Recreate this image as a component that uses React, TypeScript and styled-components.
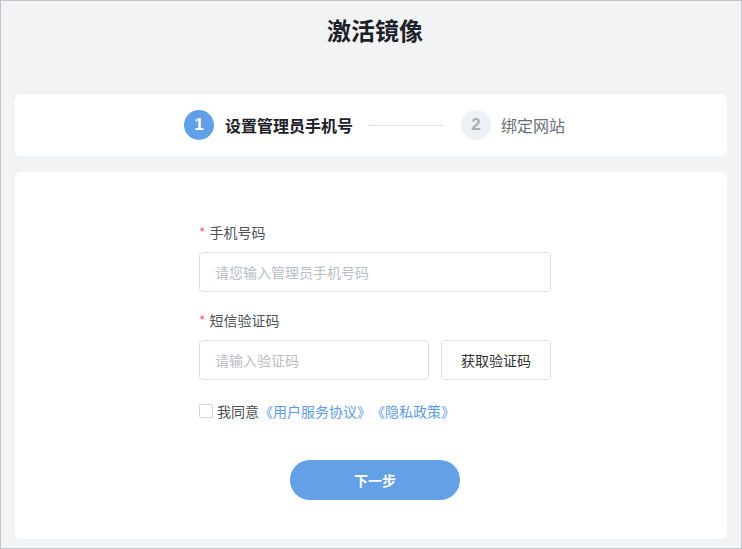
import React, { useState } from 'react'
import styled, { createGlobalStyle } from 'styled-components'

const GlobalStyle = createGlobalStyle`
    html, body {
        margin: 0;
        padding: 0;
        background: #f2f3f5;
    }
    * {
        box-sizing: border-box;
    }
`

export default function App() {
    const [phone, setPhone] = useState('')
    const [code, setCode] = useState('')
    const [agree, setAgree] = useState(false)

    return (
        <Page>
            <GlobalStyle />
            <Title>激活镜像</Title>
            <StepsCard>
                <Step>
                    <StepDot active>1</StepDot>
                    <StepLabel active>设置管理员手机号</StepLabel>
                </Step>
                <StepLine />
                <Step>
                    <StepDot>2</StepDot>
                    <StepLabel>绑定网站</StepLabel>
                </Step>
            </StepsCard>
            <FormCard>
                <FormColumn>
                    <Label><Star>*</Star>手机号码</Label>
                    <Input
                        value={phone}
                        onChange={(e) => setPhone(e.target.value)}
                        placeholder="请您输入管理员手机号码"
                    />
                    <Label spaced><Star>*</Star>短信验证码</Label>
                    <CodeRow>
                        <Input
                            grow
                            value={code}
                            onChange={(e) => setCode(e.target.value)}
                            placeholder="请输入验证码"
                        />
                        <CodeButton type="button">获取验证码</CodeButton>
                    </CodeRow>
                    <AgreeRow>
                        <Checkbox checked={agree} onClick={() => setAgree(!agree)} />
                        <span>我同意</span>
                        <Policy href="#">《用户服务协议》</Policy>
                        <Policy href="#">《隐私政策》</Policy>
                    </AgreeRow>
                    <NextButton type="button">下一步</NextButton>
                </FormColumn>
            </FormCard>
        </Page>
    )
}

const Page = styled.div`
    height: 549px;
    border: 1px solid #c3c6cc;
    background: #f2f3f5;
    padding: 0 14px 9px;
    display: flex;
    flex-direction: column;
    font-family: "Noto Sans CJK SC", "Noto Sans", sans-serif;
    color: #333;
`

const Title = styled.h1`
    margin: 13px 0 0;
    height: 80px;
    padding-left: 8px;
    font-size: 24px;
    line-height: 32px;
    font-weight: 700;
    text-align: center;
    color: #1d2129;
`

const StepsCard = styled.div`
    background: #fff;
    border-radius: 6px;
    height: 62px;
    display: flex;
    align-items: center;
    justify-content: center;
    padding-left: 7px;
`

const Step = styled.div`
    display: flex;
    align-items: center;
`

const StepDot = styled.div<{ active?: boolean }>`
    width: 30px;
    height: 30px;
    border-radius: 50%;
    display: flex;
    align-items: center;
    justify-content: center;
    font-family: "Liberation Sans", Arial, sans-serif;
    font-size: 17px;
    font-weight: 700;
    background: ${(p) => (p.active ? '#619fe7' : '#edf0f4')};
    color: ${(p) => (p.active ? '#fff' : '#a9aeb8')};
`

const StepLabel = styled.span<{ active?: boolean }>`
    font-size: 16px;
    line-height: 22px;
    margin-left: ${(p) => (p.active ? '11px' : '10px')};
    font-weight: ${(p) => (p.active ? 600 : 400)};
    color: ${(p) => (p.active ? '#1d2129' : '#6b6f78')};
`

const StepLine = styled.div`
    width: 74px;
    height: 1px;
    background: #dcdfe6;
    margin: 0 18px 0 16px;
`

const FormCard = styled.div`
    flex: 1;
    margin-top: 16px;
    background: #fff;
    border-radius: 6px;
    padding: 50px 0 0 184px;
`

const FormColumn = styled.div`
    width: 352px;
    display: flex;
    flex-direction: column;
`

const Label = styled.div<{ spaced?: boolean }>`
    font-size: 14px;
    line-height: 20px;
    color: #4e5158;
    margin: ${(p) => (p.spaced ? '18px' : '0')} 0 10px;
`

const Star = styled.span`
    color: #f56c6c;
    margin-right: 4px;
`

const Input = styled.input<{ grow?: boolean }>`
    flex: ${(p) => (p.grow ? '1 1 auto' : 'none')};
    width: ${(p) => (p.grow ? 'auto' : '100%')};
    min-width: 0;
    height: 40px;
    border: 1px solid #dcdfe6;
    border-radius: 4px;
    padding: 0 15px;
    font-family: inherit;
    font-size: 14px;
    color: #333;
    outline: none;

    &::placeholder {
        color: #b8bcc4;
    }
`

const CodeRow = styled.div`
    display: flex;
    gap: 12px;
`

const CodeButton = styled.button`
    flex: none;
    width: 110px;
    height: 40px;
    background: #fff;
    border: 1px solid #dcdfe6;
    border-radius: 4px;
    font-family: inherit;
    font-size: 14px;
    color: #333;
    cursor: pointer;
`

const AgreeRow = styled.div`
    display: flex;
    align-items: center;
    margin-top: 21px;
    height: 20px;
    font-size: 14px;
    color: #4e5158;
`

const Checkbox = styled.span<{ checked?: boolean }>`
    width: 14px;
    height: 14px;
    border: 1px solid #d3d6dc;
    border-radius: 2px;
    margin-right: 4px;
    background: ${(p) => (p.checked ? '#619fe7' : '#fff')};
    cursor: pointer;
`

const Policy = styled.a`
    color: #5d9be5;
    text-decoration: none;
`

const NextButton = styled.button`
    align-self: center;
    margin-top: 39px;
    width: 170px;
    height: 40px;
    border: none;
    border-radius: 20px;
    background: #64a0e6;
    color: #fff;
    font-family: inherit;
    font-size: 14px;
    font-weight: 600;
    cursor: pointer;
`
